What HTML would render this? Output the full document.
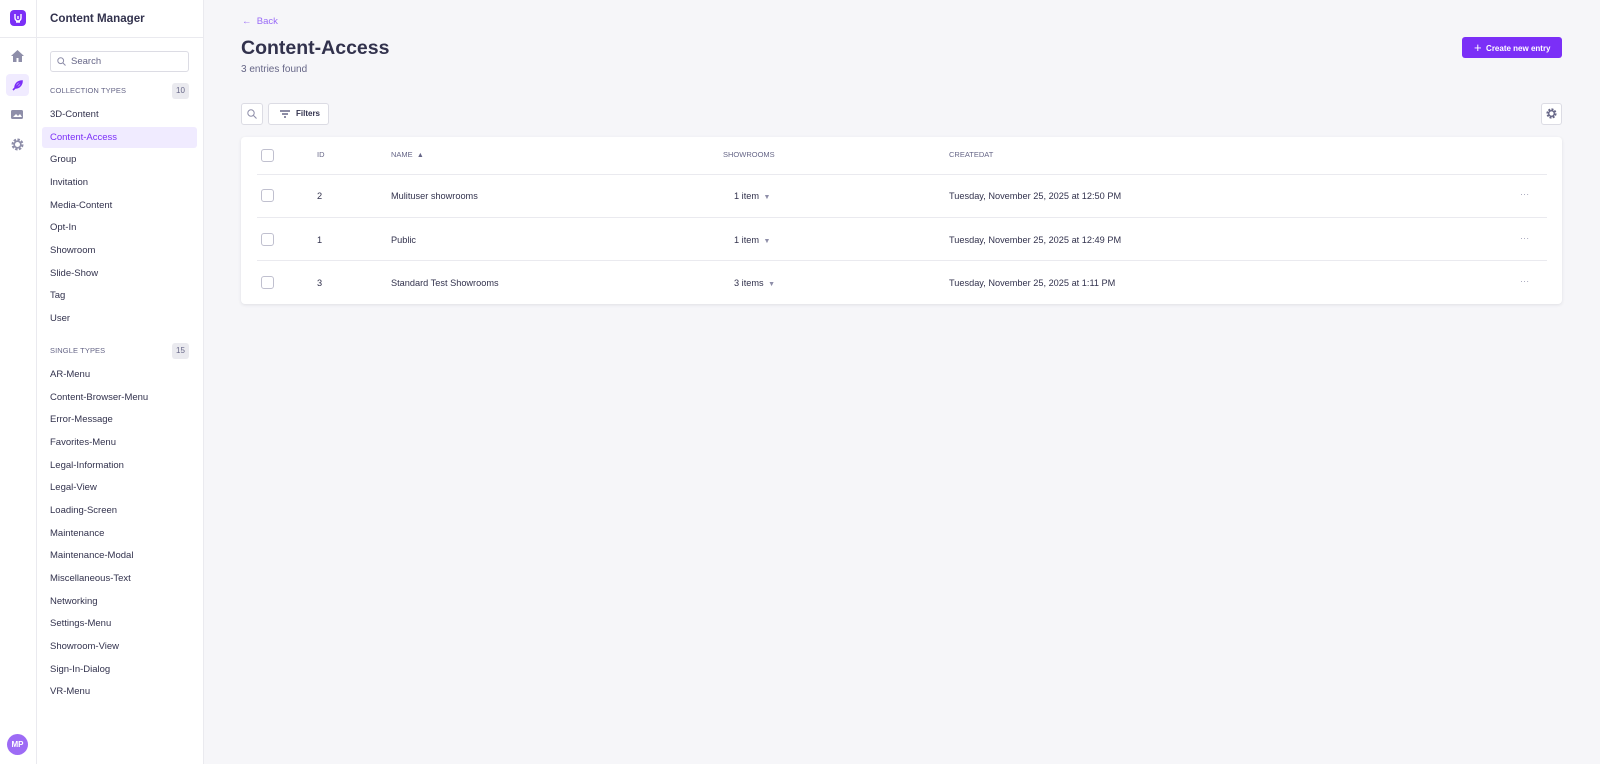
<!DOCTYPE html>
<html><head><meta charset="utf-8"><style>
*{box-sizing:border-box;margin:0;padding:0}
body{width:1600px;height:764px;background:#f6f6f9;font-family:"Liberation Sans",sans-serif;color:#32324d;position:relative;overflow:hidden;font-size:11px}
.abs{position:absolute}
.rail{left:0;top:0;width:37px;height:764px;background:#fff;border-right:1px solid #eaeaef}
.side{left:37px;top:0;width:167px;height:764px;background:#fff;border-right:1px solid #eaeaef}
.item{position:absolute;left:50px;font-size:9.5px;color:#32324d;line-height:14px}
.hdr{position:absolute;left:50px;font-size:7.5px;color:#666687;letter-spacing:.1px}
.badge{position:absolute;left:172px;width:17px;height:16px;background:#eaeaef;border-radius:3px;font-size:8px;color:#666687;text-align:center;line-height:16px}
.cb{position:absolute;left:261px;width:13px;height:13px;border:1px solid #c0c0cf;border-radius:3px;background:#fff}
.cell{position:absolute;font-size:9.2px;color:#32324d;line-height:12px}
.th{position:absolute;font-size:7.5px;color:#666687;line-height:10px}
.line{position:absolute;left:257px;width:1290px;height:1px;background:#eaeaef}
</style></head><body>
<div class="abs rail"></div>
<div class="abs" style="left:10px;top:10px;width:16px;height:16px;background:#7b2ff7;border-radius:4px"></div>
<svg class="abs" style="left:10px;top:10px" width="16" height="16" viewBox="0 0 16 16"><path d="M5 4v4a3 3 0 006 0V4M8 6v3M6 12h4" stroke="#fff" stroke-width="1.4" fill="none"/></svg>
<div class="abs" style="left:0;top:37px;width:37px;height:1px;background:#eaeaef"></div>
<svg class="abs" style="left:11px;top:50px" width="13" height="12" viewBox="0 0 13 12"><path d="M6.5 0L0 6h2v6h3.5V8h2v4H11V6h2z" fill="#8e8ea9"/></svg>
<div class="abs" style="left:6px;top:74px;width:23px;height:22px;background:#f0ebff;border-radius:4px"></div>
<svg class="abs" style="left:11px;top:79px" width="13" height="13" viewBox="0 0 13 13"><path d="M2 11L11 2M4 9c0-5 4-7 7-7 0 3-2 7-7 7" stroke="#7b2ff7" stroke-width="1.6" fill="none"/></svg>
<svg class="abs" style="left:11px;top:109px" width="13" height="11" viewBox="0 0 13 11"><rect x="0" y="1" width="12" height="9" rx="1.5" fill="#8e8ea9"/><path d="M2 8l3-3 2 2 2-2 2 3z" fill="#fff"/></svg>
<svg class="abs" style="left:11px;top:138px" width="13" height="13" viewBox="0 0 13 13"><circle cx="6.5" cy="6.5" r="4.5" fill="none" stroke="#8e8ea9" stroke-width="3" stroke-dasharray="2.2 1.3"/><circle cx="6.5" cy="6.5" r="3.3" fill="none" stroke="#8e8ea9" stroke-width="1.6"/></svg>
<div class="abs" style="left:7px;top:734px;width:21px;height:21px;border-radius:50%;background:#9d6bf5;color:#fff;font-size:8px;font-weight:bold;text-align:center;line-height:21px">MP</div>

<div class="abs side"></div>
<div class="abs" style="left:50px;top:12px;font-size:11.6px;font-weight:bold;color:#32324d">Content Manager</div>
<div class="abs" style="left:37px;top:37px;width:167px;height:1px;background:#eaeaef"></div>
<div class="abs" style="left:50px;top:51px;width:139px;height:21px;border:1px solid #dcdce4;border-radius:3px"></div>
<svg class="abs" style="left:57px;top:57px" width="9" height="9" viewBox="0 0 9 9"><circle cx="3.7" cy="3.7" r="2.9" fill="none" stroke="#8e8ea9" stroke-width="1"/><path d="M6 6l2.5 2.5" stroke="#8e8ea9"/></svg>
<div class="abs" style="left:71px;top:56px;font-size:9.5px;color:#666687">Search</div>
<div class="hdr" style="top:86px">COLLECTION TYPES</div><div class="badge" style="top:83px">10</div>
<div class="abs" style="left:42px;top:127px;width:155px;height:21px;background:#f0ebff;border-radius:3px"></div>
<div class="item" style="top:108px">3D-Content</div>
<div class="item" style="top:131px;color:#7b2ff7">Content-Access</div>
<div class="item" style="top:153px">Group</div>
<div class="item" style="top:176px">Invitation</div>
<div class="item" style="top:199px">Media-Content</div>
<div class="item" style="top:221px">Opt-In</div>
<div class="item" style="top:244px">Showroom</div>
<div class="item" style="top:267px">Slide-Show</div>
<div class="item" style="top:289px">Tag</div>
<div class="item" style="top:312px">User</div>
<div class="hdr" style="top:346px">SINGLE TYPES</div><div class="badge" style="top:343px">15</div>
<div class="item" style="top:368px">AR-Menu</div>
<div class="item" style="top:391px">Content-Browser-Menu</div>
<div class="item" style="top:413px">Error-Message</div>
<div class="item" style="top:436px">Favorites-Menu</div>
<div class="item" style="top:459px">Legal-Information</div>
<div class="item" style="top:481px">Legal-View</div>
<div class="item" style="top:504px">Loading-Screen</div>
<div class="item" style="top:527px">Maintenance</div>
<div class="item" style="top:549px">Maintenance-Modal</div>
<div class="item" style="top:572px">Miscellaneous-Text</div>
<div class="item" style="top:595px">Networking</div>
<div class="item" style="top:617px">Settings-Menu</div>
<div class="item" style="top:640px">Showroom-View</div>
<div class="item" style="top:663px">Sign-In-Dialog</div>
<div class="item" style="top:685px">VR-Menu</div>

<div class="abs" style="left:242px;top:16px;font-size:9.5px;color:#9a6bf7">&#8592;&nbsp; Back</div>
<div class="abs" style="left:241px;top:37px;font-size:19.5px;font-weight:bold;color:#32324d">Content-Access</div>
<div class="abs" style="left:241px;top:64px;font-size:10px;color:#666687">3 entries found</div>
<div class="abs" style="left:1462px;top:37px;width:100px;height:21px;background:#7b2ff7;border-radius:3px;color:#fff;font-size:8px;font-weight:bold;line-height:21px;padding-left:12px;white-space:nowrap"><span style="font-size:13px;font-weight:normal;vertical-align:-1px">+</span>&nbsp; Create new entry</div>

<div class="abs" style="left:241px;top:103px;width:22px;height:22px;background:#fff;border:1px solid #dcdce4;border-radius:3px"></div>
<svg class="abs" style="left:247px;top:109px" width="10" height="10" viewBox="0 0 10 10"><circle cx="4" cy="4" r="3.2" fill="none" stroke="#8e8ea9" stroke-width="1"/><path d="M6.5 6.5l3 3" stroke="#8e8ea9"/></svg>
<div class="abs" style="left:268px;top:103px;width:61px;height:22px;background:#fff;border:1px solid #dcdce4;border-radius:3px;font-size:8px;font-weight:bold;line-height:20px;padding-left:27px">Filters</div>
<svg class="abs" style="left:280px;top:110px" width="10" height="8" viewBox="0 0 10 8"><path d="M0 1h10M2 4h6M4 7h2" stroke="#666687" stroke-width="1.4"/></svg>
<div class="abs" style="left:1541px;top:103px;width:21px;height:22px;background:#fff;border:1px solid #dcdce4;border-radius:3px"></div>
<svg class="abs" style="left:1546px;top:108px" width="11" height="11" viewBox="0 0 13 13"><circle cx="6.5" cy="6.5" r="4.5" fill="none" stroke="#666687" stroke-width="3" stroke-dasharray="2.2 1.3"/><circle cx="6.5" cy="6.5" r="3.3" fill="none" stroke="#666687" stroke-width="1.6"/></svg>

<div class="abs" style="left:241px;top:137px;width:1321px;height:167px;background:#fff;border-radius:4px;box-shadow:0 1px 3px rgba(33,33,52,.1)"></div>
<div class="cb" style="top:149px"></div>
<div class="th" style="left:317px;top:150px">ID</div>
<div class="th" style="left:391px;top:150px">NAME &nbsp;<span style="font-size:7px">&#9650;</span></div>
<div class="th" style="left:723px;top:150px">SHOWROOMS</div>
<div class="th" style="left:949px;top:150px">CREATEDAT</div>
<div class="line" style="top:174px"></div>
<div class="cb" style="top:189px"></div>
<div class="cell" style="left:317px;top:190px">2</div>
<div class="cell" style="left:391px;top:190px">Mulituser showrooms</div>
<div class="cell" style="left:734px;top:190px">1 item <span style="color:#8e8ea9;font-size:7px">&nbsp;&#9660;</span></div>
<div class="cell" style="left:949px;top:190px">Tuesday, November 25, 2025 at 12:50 PM</div>
<div class="cell" style="left:1520px;top:188px;color:#a5a5ba">···</div>
<div class="line" style="top:217px"></div>
<div class="cb" style="top:233px"></div>
<div class="cell" style="left:317px;top:234px">1</div>
<div class="cell" style="left:391px;top:234px">Public</div>
<div class="cell" style="left:734px;top:234px">1 item <span style="color:#8e8ea9;font-size:7px">&nbsp;&#9660;</span></div>
<div class="cell" style="left:949px;top:234px">Tuesday, November 25, 2025 at 12:49 PM</div>
<div class="cell" style="left:1520px;top:232px;color:#a5a5ba">···</div>
<div class="line" style="top:260px"></div>
<div class="cb" style="top:276px"></div>
<div class="cell" style="left:317px;top:277px">3</div>
<div class="cell" style="left:391px;top:277px">Standard Test Showrooms</div>
<div class="cell" style="left:734px;top:277px">3 items <span style="color:#8e8ea9;font-size:7px">&nbsp;&#9660;</span></div>
<div class="cell" style="left:949px;top:277px">Tuesday, November 25, 2025 at 1:11 PM</div>
<div class="cell" style="left:1520px;top:275px;color:#a5a5ba">···</div>
</body></html>
